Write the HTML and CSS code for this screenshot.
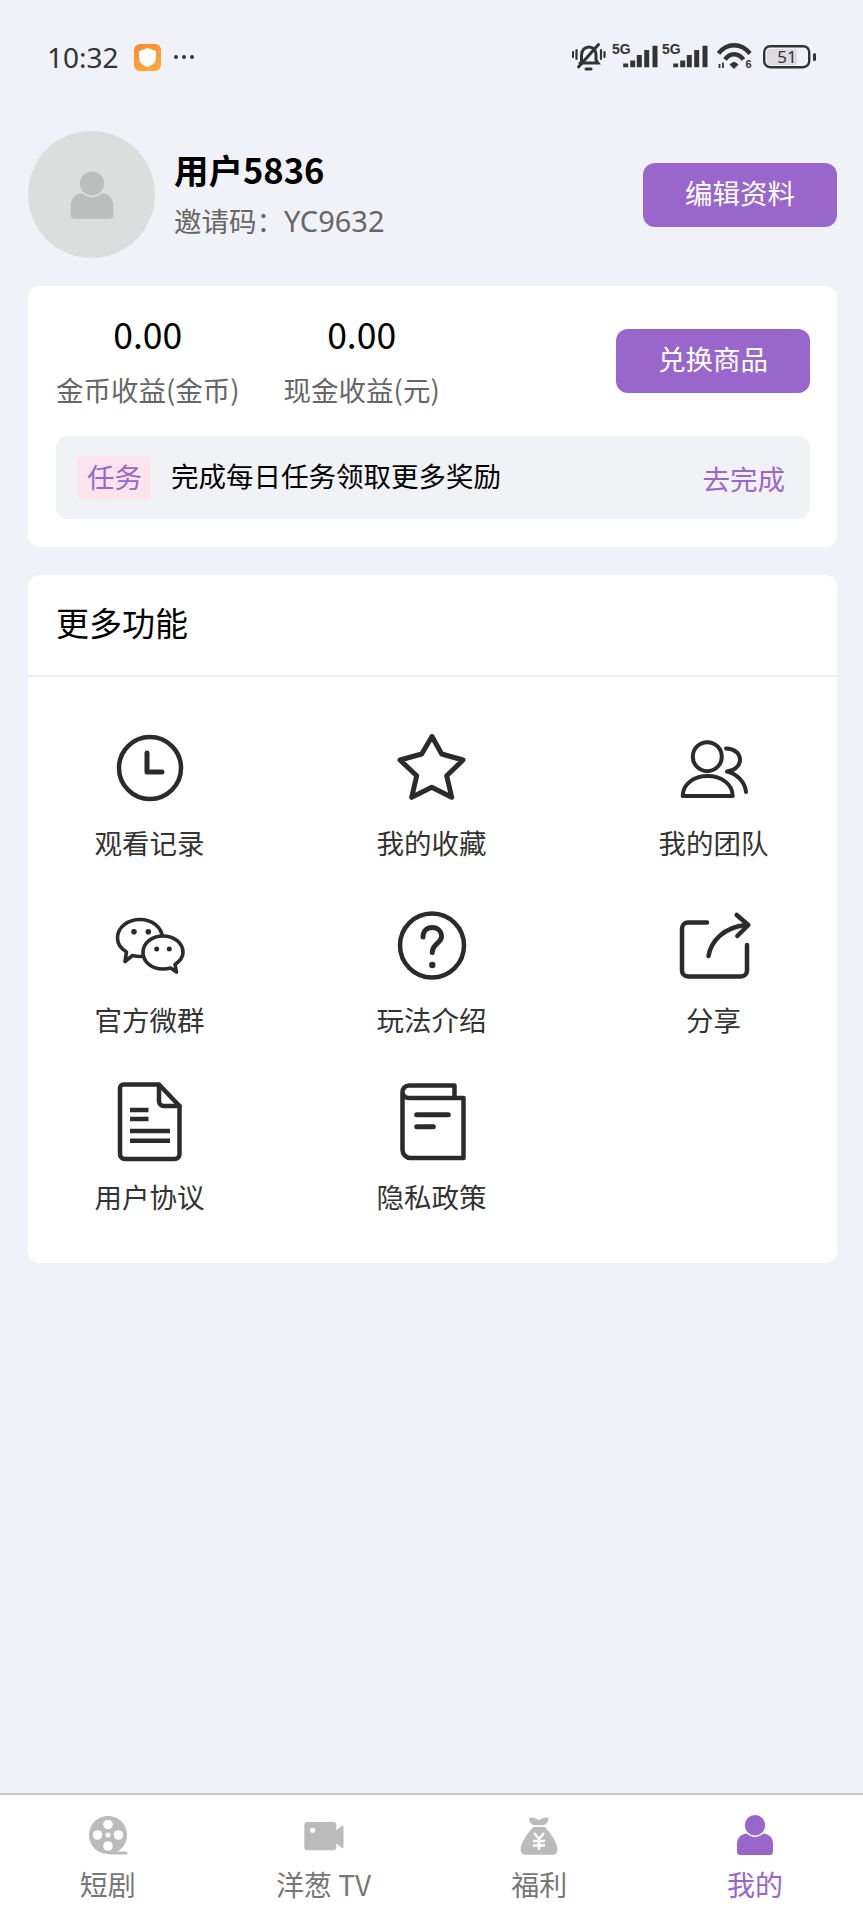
FILE: index.html
```html
<!DOCTYPE html>
<html lang="zh-CN">

<head>
  <meta charset="utf-8">
  <title>我的</title>
  <link rel="stylesheet" href="styles.css">
</head>

<body>
  <svg class="defs" width="0" height="0">
    <symbol id="user" viewBox="0 0 44 44">
      <path d="M4 31C4 24 9 20.5 14 20.5H30C35 20.5 40 24 40 31V39a3 3 0 0 1-3 3H7a3 3 0 0 1-3-3Z" />
      <circle cx="22" cy="12.3" r="11" stroke="var(--gap)" stroke-width="1.5" />
    </symbol>
  </svg>

  <div class="status-bar">
    <span class="time">10:32</span>
    <span class="app-badge">
      <svg width="27" height="27" viewBox="0 0 27 27"><path d="M13.5 4L22 7V14C22 18.5 18 21.5 13.5 23C9 21.5 5 18.5 5 14V7Z" fill="#fff" /></svg>
    </span>
    <svg class="more-dots" width="22" height="6" viewBox="0 0 22 6" fill="#333"><circle cx="3" cy="3" r="2" /><circle cx="11" cy="3" r="2" /><circle cx="19" cy="3" r="2" /></svg>
    <div class="status-right">
      <svg class="st-bell" width="34" height="30" viewBox="0 0 34 30" fill="none" stroke="#333" stroke-width="3" stroke-linecap="round">
        <path d="M9.5 20V13C9.5 8 13 5 17 5C21 5 24 8 24 13V18L26 21H8" />
        <path d="M6.5 25L26.5 2.5" />
        <path d="M14 27H19" />
        <path d="M1 10V15M4.5 8V17M29 8V17M32.5 10V15" stroke-width="2.2" />
      </svg>
      <svg class="st-signal" width="46" height="30" viewBox="0 0 46 30">
        <text class="st-5g" x="0" y="12">5G</text>
        <path d="M13.7 21.5V25.3M20.7 18.5V25.3M27.3 13V25.3M34.7 8V25.3M43 3.7V25.3" stroke="#333" stroke-width="5" />
      </svg>
      <svg class="st-signal2" width="46" height="30" viewBox="0 0 46 30">
        <text class="st-5g" x="0" y="12">5G</text>
        <path d="M13.7 21.5V25.3M20.7 18.5V25.3M27.3 13V25.3M34.7 8V25.3M43 3.7V25.3" stroke="#333" stroke-width="5" />
      </svg>
      <svg class="st-wifi" width="36" height="30" viewBox="0 0 36 30" fill="none" stroke="#333" stroke-width="4.4">
        <path d="M1.5 11.5C10 .5 24 .5 33 11.5" />
        <path d="M8 17.5C13 10.5 21 10.5 26.5 17.5" />
        <path d="M13 22.5L17 20L21 22.5L17 26.5Z" fill="#333" stroke-width="1" />
        <path d="M2.5 22V26M6 20.5V26" stroke-width="1.8" />
        <text class="st-six" x="28.5" y="26">6</text>
      </svg>
      <svg class="st-battery" width="54" height="24" viewBox="0 0 54 24">
        <rect x="4" y="4" width="30" height="16" rx="2" fill="#dcdce0" />
        <rect x="1.2" y="1.2" width="45" height="21" rx="6" fill="none" stroke="#333" stroke-width="2.4" />
        <text class="st-level" x="24" y="18">51</text>
        <rect x="50" y="8" width="3" height="8" rx="1.5" fill="#333" />
      </svg>
    </div>
  </div>

  <div class="profile">
    <div class="avatar">
      <svg class="avatar-icon" width="52" height="52"><use href="#user" /></svg>
    </div>
    <div class="profile-info">
      <div class="user-name">用户5836</div>
      <div class="invite-code">邀请码：<span class="invite-num">YC9632</span></div>
    </div>
    <button class="btn btn-edit">编辑资料</button>
  </div>

  <div class="card earn-card">
    <div class="earn-top">
      <div class="stat">
        <div class="stat-value">0.00</div>
        <div class="stat-label">金币收益(金币)</div>
      </div>
      <div class="stat">
        <div class="stat-value">0.00</div>
        <div class="stat-label">现金收益(元)</div>
      </div>
      <button class="btn btn-exchange">兑换商品</button>
    </div>
    <div class="task-row">
      <span class="task-tag">任务</span>
      <span class="task-text">完成每日任务领取更多奖励</span>
      <span class="task-go">去完成</span>
    </div>
  </div>

  <div class="card more-card">
    <div class="more-title">更多功能</div>
    <div class="more-grid">
      <div class="more-item">
        <svg class="more-icon" viewBox="0 0 80 80">
          <circle cx="40" cy="40" r="31" />
          <path d="M37 25V44H52" stroke-width="5" />
        </svg>
        <span>观看记录</span>
      </div>
      <div class="more-item">
        <svg class="more-icon" viewBox="0 0 80 80">
          <path d="M40 8.5L49.7 26L71 32L54.7 47.7L59.7 69.3L39.7 59.3L19.7 69.3L24.7 47.7L8 32L29.7 26Z" stroke-width="5" />
        </svg>
        <span>我的收藏</span>
      </div>
      <div class="more-item">
        <svg class="more-icon" viewBox="0 0 80 80">
          <circle cx="33.3" cy="28.7" r="14.5" stroke-width="4" />
          <path d="M8.7 68C8.7 56 20 48 33.7 48C47 48 58.7 56 58.7 68Z" stroke-width="4" />
          <path d="M52 20.5C60 20.5 66 25 66 32C66 38 60 43 53 43.5C63 46 71 54 72 64" stroke-width="4" />
        </svg>
        <span>我的团队</span>
      </div>
      <div class="more-item">
        <svg class="more-icon" viewBox="0 0 80 80">
          <path d="M15 56.5L16.5 47C10 43 7.5 38 7.5 33C7.5 22 18 14.5 30 14.5C42 14.5 52 22 52.5 33C52.5 44 42 51.5 30 51.5C27 51.5 24.5 51 22.5 50.5Z" stroke-width="3.6" />
          <path class="icon-white" d="M66.5 67L65 59.5C70 56 73 52 73 47.5C73 38 64 31 53 31C42 31 33 38 33 47.5C33 57 42 64 53 64C56 64 58.5 63.7 60.5 63Z" stroke-width="3.6" />
          <g class="icon-solid">
            <circle cx="24" cy="26.7" r="2.8" /><circle cx="38.3" cy="26.7" r="2.8" />
            <circle cx="46.7" cy="44" r="2.5" /><circle cx="59.3" cy="44" r="2.5" />
          </g>
        </svg>
        <span>官方微群</span>
      </div>
      <div class="more-item">
        <svg class="more-icon" viewBox="0 0 80 80">
          <circle cx="40" cy="40.5" r="32" />
          <path d="M31 32C31 26 35 22.5 40.3 22.5C46 22.5 49.5 26.5 49.5 31.5C49.5 38 40.3 38.5 40.3 47.5" stroke-width="5" />
          <circle class="icon-solid" cx="40.3" cy="60" r="3.2" />
        </svg>
        <span>玩法介绍</span>
      </div>
      <div class="more-item">
        <svg class="more-icon" viewBox="0 0 80 80">
          <path d="M33 17.5H14a6 6 0 0 0-6 6V65.5a6 6 0 0 0 6 6H67a6 6 0 0 0 6-6V40" />
          <path d="M34.5 51C37 36 50 22 72 20" />
          <path d="M62.7 10L74.3 20L63.3 31" />
        </svg>
        <span>分享</span>
      </div>
      <div class="more-item">
        <svg class="more-icon" viewBox="0 0 80 80">
          <path d="M14 2.5H49L69.5 24V72a5 5 0 0 1-5 5H15a5 5 0 0 1-5-5V6a3.5 3.5 0 0 1 3.5-3.5Z" />
          <path d="M49 3V19a5 5 0 0 0 5 5H69.5" />
          <path class="icon-butt" d="M20 28H38.5M20 37H38.5M20 49H60M20 58.7H60" />
        </svg>
        <span>用户协议</span>
      </div>
      <div class="more-item">
        <svg class="more-icon" viewBox="0 0 80 80">
          <path d="M62.5 16V3.5H17a6.5 6.5 0 0 0-6.5 6.5V68a8 8 0 0 0 8 8H71.5V16H17a6.5 6.5 0 0 1-6.5-6" />
          <path d="M24.7 32.7H56.3M24.7 44.7H41.3" stroke-width="5" />
        </svg>
        <span>隐私政策</span>
      </div>
    </div>
  </div>

  <div class="tab-bar">
    <div class="tab">
      <svg class="tab-icon" viewBox="0 0 44 44">
        <circle cx="22" cy="22" r="19" fill="#bbb" />
        <rect x="22" y="38.5" width="19.5" height="3" rx="1.5" fill="#bbb" />
        <g fill="#fff">
          <circle cx="22" cy="11.5" r="4.8" /><circle cx="22" cy="33" r="4.8" />
          <circle cx="11.5" cy="22" r="4.8" /><circle cx="32.5" cy="22" r="4.8" />
          <circle cx="22" cy="22" r="2.5" />
        </g>
      </svg>
      <span>短剧</span>
    </div>
    <div class="tab">
      <svg class="tab-icon" viewBox="0 0 44 44">
        <rect x="2.3" y="9" width="32" height="28.3" rx="3" fill="#bbb" />
        <path d="M33.5 18L40 13a1 1 0 0 1 1.5 1V34a1 1 0 0 1-1.5 1L33.5 30Z" fill="#bbb" />
        <circle cx="10.7" cy="17.3" r="2.6" fill="#fff" />
      </svg>
      <span>洋葱 TV</span>
    </div>
    <div class="tab">
      <svg class="tab-icon" viewBox="0 0 44 44">
        <path d="M12.3 5C15 3.5 19 5 22 7.3C25 5 29 3.5 31.3 5C32 8 29.5 11 26.5 12.3H17C14 11 11.5 8 12.3 5Z" fill="#bbb" />
        <path d="M16.3 14H28C33 20 40.5 29 40.5 36.5C40.5 40 38.5 41.7 36 41.7H8C5.5 41.7 3.6 40 3.6 36.5C3.6 29 11 20 16.3 14Z" fill="#bbb" />
        <path d="M17 20L22 26L27 20M22 26V37M16 28H28M16 32.5H28" fill="none" stroke="#fff" stroke-width="2.4" />
      </svg>
      <span>福利</span>
    </div>
    <div class="tab tab-active">
      <svg class="tab-icon tab-user" viewBox="0 0 44 44"><use href="#user" /></svg>
      <span>我的</span>
    </div>
  </div>
</body>

</html>
```

FILE: styles.css
```css
body {
  margin: 0;
  width: 863px;
  height: 1920px;
  display: flex;
  flex-direction: column;
  background-color: #f1f2f7;
  font-family: "Noto Sans CJK SC", "Noto Sans", sans-serif;
  color: #333;
  overflow: hidden;
}
.defs {
  position: absolute;
}

/* 状态栏 */
.status-bar {
  height: 114px;
  flex-shrink: 0;
  display: flex;
  align-items: center;
  padding: 0 46px 0 47px;
}
.time {
  font-family: "Noto Sans", sans-serif;
  font-size: 28px;
  color: #333;
}
.app-badge {
  width: 27px;
  height: 27px;
  margin-left: 15px;
  border-radius: 6px;
  background: linear-gradient(160deg, #f98b2c, #fdab3d);
  display: flex;
}
.more-dots {
  margin-left: 12px;
}
.status-right {
  margin-left: auto;
  display: flex;
  align-items: center;
}
.st-signal {
  margin-left: 6px;
}
.st-signal2 {
  margin-left: 4px;
}
.st-wifi {
  margin-left: 9px;
}
.st-battery {
  margin-left: 10px;
}
.st-5g {
  font-family: "Liberation Sans", sans-serif;
  font-weight: bold;
  font-size: 14px;
  fill: #333;
}
.st-six {
  font-family: "Liberation Sans", sans-serif;
  font-weight: bold;
  font-size: 11px;
  fill: #333;
  stroke: none;
}
.st-level {
  font-family: "Noto Sans", sans-serif;
  font-size: 17px;
  fill: #333;
  text-anchor: middle;
}

/* 用户信息 */
.profile {
  display: flex;
  align-items: center;
  margin: 17px 26px 0 28px;
}
.avatar {
  width: 127px;
  height: 127px;
  flex-shrink: 0;
  border-radius: 50%;
  background-color: #dcdddd;
  display: flex;
  align-items: center;
  justify-content: center;
}
.avatar-icon {
  --gap: #dcdddd;
  fill: #bcbdbd;
}
.profile-info {
  margin-left: 19px;
}
.user-name {
  font-size: 34.5px;
  line-height: 40px;
  font-weight: bold;
  color: #000;
}
.invite-code {
  margin-top: 11px;
  font-size: 27.5px;
  line-height: 40px;
  color: #666;
}
.invite-num {
  font-family: "Noto Sans", sans-serif;
  font-size: 29px;
}
.btn {
  width: 194px;
  height: 64px;
  padding: 0 0 5px;
  border: none;
  border-radius: 12px;
  background-color: #9966cc;
  color: #fff;
  font-family: inherit;
  font-size: 27.5px;
}
.btn-edit {
  margin-left: auto;
}
.btn-exchange {
  margin-left: auto;
}

/* 卡片 */
.card {
  margin: 28px 26px 0 28px;
  border-radius: 12px;
  background-color: #fff;
}
.earn-card {
  padding: 27px 27px 28px 28px;
}
.earn-top {
  display: flex;
  align-items: center;
  gap: 44px;
}
.stat {
  text-align: center;
}
.stat-value {
  font-size: 35.5px;
  line-height: 41px;
  color: #000;
}
.stat-label {
  margin-top: 16px;
  font-size: 27.5px;
  line-height: 38px;
  color: #666;
  white-space: nowrap;
}
.task-row {
  height: 83px;
  margin-top: 28px;
  padding: 0 25px 0 22px;
  display: flex;
  align-items: center;
  border-radius: 12px;
  background-color: #f1f2f6;
}
.task-tag {
  width: 73px;
  height: 44px;
  border-radius: 4px;
  background-color: #fce4ec;
  color: #9966cc;
  font-size: 27.5px;
  line-height: 40px;
  text-align: center;
}
.task-text {
  margin-left: 20px;
  margin-top: -6px;
  font-size: 27.5px;
  color: #000;
}
.task-go {
  margin-left: auto;
  font-size: 27.5px;
  color: #9966cc;
}

/* 更多功能 */
.more-title {
  height: 100px;
  padding-left: 28px;
  border-bottom: 2px solid #eeeeee;
  font-size: 33px;
  line-height: 94px;
  color: #000;
}
.more-grid {
  display: grid;
  grid-template-columns: repeat(3, 282px);
  justify-content: center;
  row-gap: 43px;
  padding: 51px 2px 47px 0;
}
.more-item {
  display: flex;
  flex-direction: column;
  align-items: center;
  gap: 16px;
  padding-bottom: 2px;
  font-size: 27.5px;
  line-height: 36px;
  color: #333;
}
.more-icon {
  width: 80px;
  height: 80px;
  fill: none;
  stroke: #2b2b2b;
  stroke-width: 4.5;
  stroke-linecap: round;
  stroke-linejoin: round;
}
.icon-white {
  fill: #fff;
}
.icon-solid {
  fill: #2b2b2b;
  stroke: none;
}
.icon-butt {
  stroke-linecap: butt;
}

/* 底部导航 */
.tab-bar {
  margin-top: auto;
  height: 125px;
  flex-shrink: 0;
  display: flex;
  border-top: 2px solid #c8c8c8;
  background-color: #fff;
}
.tab {
  flex: 1;
  display: flex;
  flex-direction: column;
  align-items: center;
  padding-top: 18px;
  font-size: 28px;
  line-height: 36px;
  color: #777;
}
.tab-icon {
  width: 44px;
  height: 44px;
  margin-bottom: 9px;
}
.tab-user {
  --gap: #fff;
  fill: #9966cc;
}
.tab-active {
  color: #9966cc;
}
```
